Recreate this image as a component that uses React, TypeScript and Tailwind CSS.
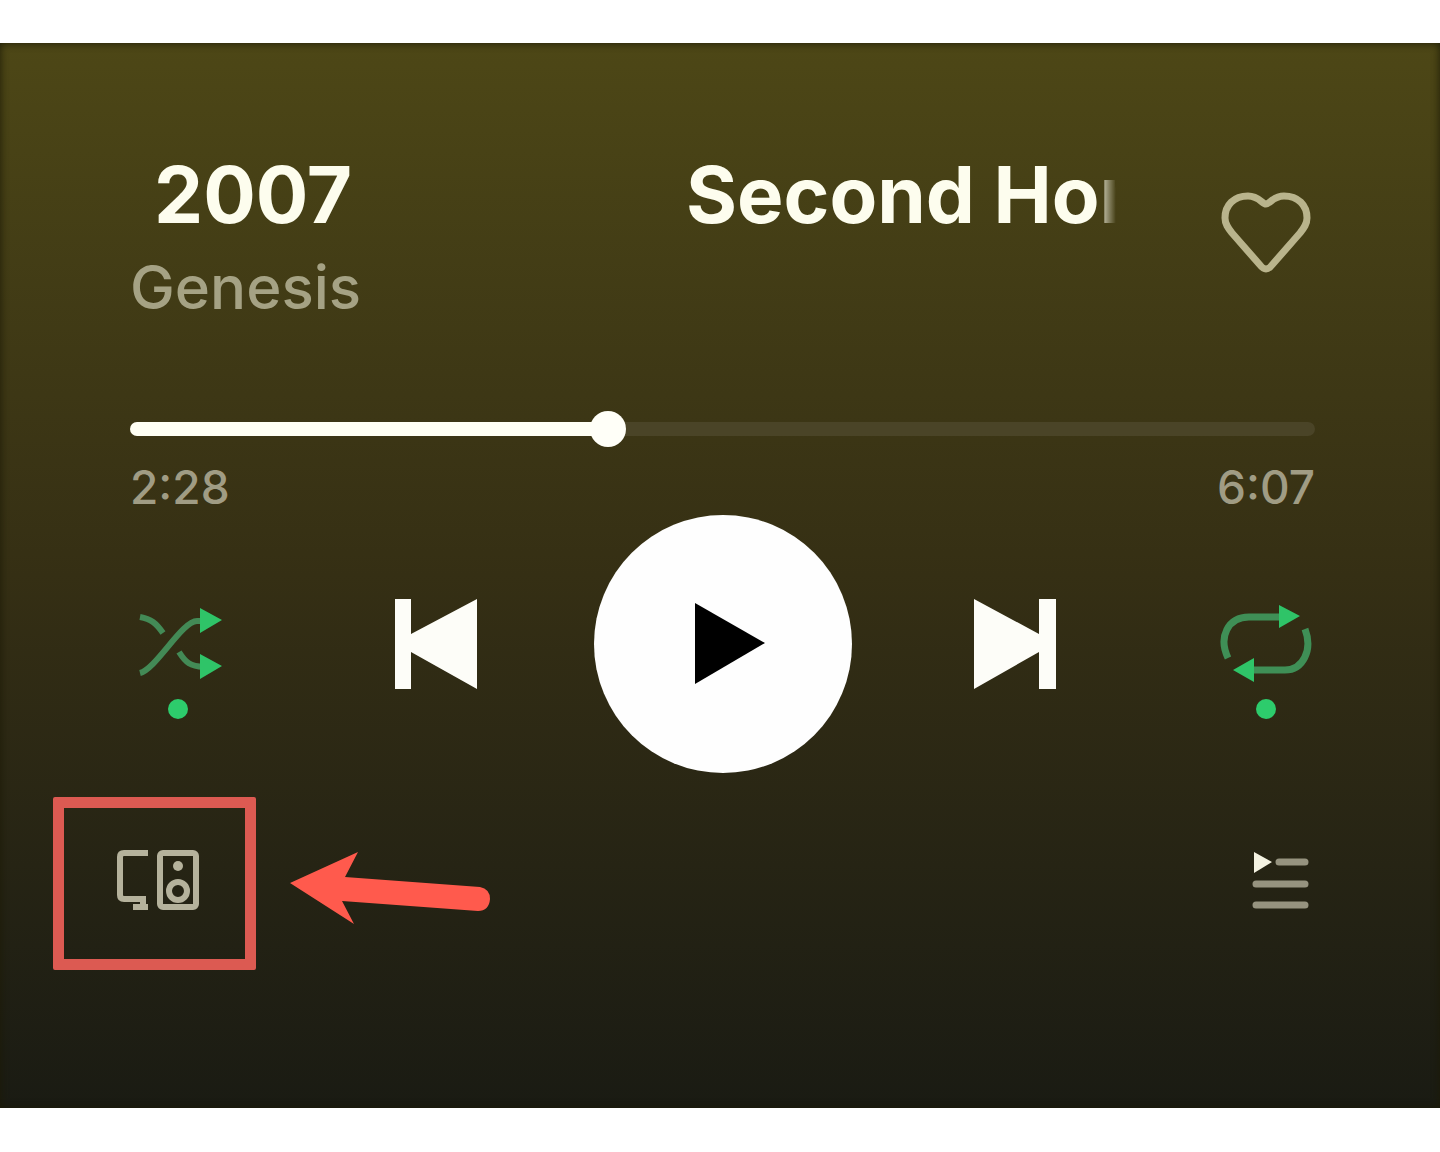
import { useState } from 'react'

const track = {
  title: 'Second Home',
  previousTitle: '2007',
  artist: 'Genesis',
  elapsed: '2:28',
  duration: '6:07',
}

function HeartIcon() {
  return (
    <svg viewBox="0 0 96 96" className="h-24 w-24" fill="none" stroke="#b9b48c" strokeWidth="7" strokeLinejoin="round" aria-hidden="true">
      <path d="M47 17C43 17 40 9 29 9C15 9 6 18 6 31C6 37 9 41 13 46L41 78Q47 86 53 78L81 46C85 41 88 37 88 31C88 18 79 9 65 9C54 9 51 17 47 17Z" />
    </svg>
  )
}

function ShuffleIcon() {
  return (
    <svg viewBox="0 0 96 150" className="h-[150px] w-24" fill="none" aria-hidden="true">
      <g stroke="#438a56" strokeWidth="6">
        <path d="M10 48C21 50 26 54 33 64" />
        <path d="M10 104C26 100 52 52 67 52H74" />
        <path d="M49 83C56 94 60 97 74 98" />
      </g>
      <path d="M70 39L92 51L70 64ZM70 85L92 97L70 110Z" fill="#2fc468" />
      <circle cx="48" cy="140" r="10" fill="#2dcc6c" />
    </svg>
  )
}

function RepeatIcon() {
  return (
    <svg viewBox="0 0 96 150" className="h-[150px] w-24" fill="none" aria-hidden="true">
      <g stroke="#3f8f56" strokeWidth="7">
        <path d="M9 89C-1 68 9 48 30 48H66" />
        <path d="M86 60C94 81 84 101 66 101H28" />
      </g>
      <path d="M60 36L81 47L60 59ZM35 89L14 101L35 113Z" fill="#2fc468" />
      <circle cx="47" cy="140" r="10" fill="#2dcc6c" />
    </svg>
  )
}

function PreviousIcon() {
  return (
    <svg viewBox="0 0 88 90" className="h-[90px] w-[88px]" fill="#fdfdf8" aria-hidden="true">
      <path d="M5 0H21V35L87 0V90L21 53V90H5Z" />
    </svg>
  )
}

function NextIcon() {
  return (
    <svg viewBox="0 0 88 90" className="h-[90px] w-[88px]" fill="#fdfdf8" aria-hidden="true">
      <path d="M6 0L71 35V0H88V90H71V53L6 90Z" />
    </svg>
  )
}

function DevicesIcon() {
  return (
    <svg viewBox="0 0 90 72" className="h-[72px] w-[90px]" fill="none" stroke="#b5b29c" strokeWidth="6" aria-hidden="true">
      <path d="M38 5H14Q10 5 10 9V47Q10 51 14 51H33V61M23 59H38" />
      <rect x="50" y="5" width="36" height="54" rx="3" />
      <circle cx="68" cy="18" r="5" fill="#b5b29c" stroke="none" />
      <circle cx="68" cy="43" r="9" strokeWidth="6" />
    </svg>
  )
}

function ArrowIcon() {
  return (
    <svg viewBox="0 0 204 80" className="ml-8 h-20 w-[204px]" fill="#ff5a4d" aria-hidden="true">
      <path d="M2 39L70 8L57 33L192 43Q202 45 202 55Q201 67 190 67L54 57L66 80Z" />
    </svg>
  )
}

function QueueIcon() {
  return (
    <svg viewBox="0 0 64 64" className="h-16 w-16" fill="none" aria-hidden="true">
      <path d="M3 0L21 10L3 21Z" fill="#f4f3e2" />
      <path d="M28 10H54M5 32H54M5 53H54" stroke="#96937f" strokeWidth="7" strokeLinecap="round" />
    </svg>
  )
}

function ProgressBar() {
  const [progress, setProgress] = useState(40)

  return (
    <div className="mt-[88px]">
      <div className="relative flex h-9 items-center">
        <div className="h-[14px] w-full overflow-hidden rounded-full bg-[#4a4427]">
          <div className="h-full bg-[#fffff4]" style={{ width: `${progress}%` }} />
        </div>
        <input
          type="range"
          min={0}
          max={100}
          value={progress}
          onChange={(e) => setProgress(Number(e.target.value))}
          aria-label="Song progress"
          className="absolute inset-0 h-9 w-full cursor-pointer appearance-none bg-transparent [&::-webkit-slider-thumb]:h-9 [&::-webkit-slider-thumb]:w-9 [&::-webkit-slider-thumb]:appearance-none [&::-webkit-slider-thumb]:rounded-full [&::-webkit-slider-thumb]:bg-[#fffff8]"
        />
      </div>
      <div className="mt-4 flex justify-between text-[46px] leading-[48px] font-medium text-[#a09c84]">
        <span>{track.elapsed}</span>
        <span>{track.duration}</span>
      </div>
    </div>
  )
}

export default function App() {
  const [playing, setPlaying] = useState(false)

  return (
    <div className="bg-white py-[43px] font-['Inter',sans-serif]">
      <main className="bg-linear-to-b from-[#4d4716] via-[#352f14] to-[#1a1b13] pt-[104px] pb-[138px] shadow-[inset_0_0_8px_#1c1a06]">
        <div className="pr-[125px] pl-[130px]">
          <header className="flex items-center justify-between">
            <div className="min-w-0">
              <div className="flex w-[986px] overflow-hidden mask-r-from-98% pl-6 text-[78px] leading-[96px] font-bold whitespace-nowrap text-[#fdfdee]">
                <span className="w-[532px] shrink-0">{track.previousTitle}</span>
                <h1>{track.title}</h1>
              </div>
              <p className="mt-2 text-[60px] leading-[72px] font-medium text-[#a5a284]">{track.artist}</p>
            </div>
            <button type="button" aria-label="Like">
              <HeartIcon />
            </button>
          </header>

          <ProgressBar />

          <div className="mt-1 flex items-center justify-between">
            <button type="button" aria-label="Shuffle">
              <ShuffleIcon />
            </button>
            <div className="flex items-center gap-[116px]">
              <button type="button" aria-label="Previous">
                <PreviousIcon />
              </button>
              <button
                type="button"
                aria-label="Play"
                aria-pressed={playing}
                onClick={() => setPlaying(!playing)}
                className="flex h-[258px] w-[258px] items-center justify-center rounded-full bg-[#fefefe]"
              >
                <svg viewBox="0 0 72 82" className="ml-3 h-[82px] w-[72px]" aria-hidden="true">
                  <path d="M2 0L72 40L2 81Z" />
                </svg>
              </button>
              <button type="button" aria-label="Next">
                <NextIcon />
              </button>
            </div>
            <button type="button" aria-label="Repeat">
              <RepeatIcon />
            </button>
          </div>
        </div>

        <div className="mt-6 flex items-center pr-[125px] pl-[53px]">
          <button
            type="button"
            aria-label="Connect to a device"
            className="flex h-[173px] w-[203px] items-center justify-center rounded-xs border-[11px] border-[#dc5a52]"
          >
            <DevicesIcon />
          </button>
          <ArrowIcon />
          <button type="button" aria-label="Queue" className="ml-auto">
            <QueueIcon />
          </button>
        </div>
      </main>
    </div>
  )
}
